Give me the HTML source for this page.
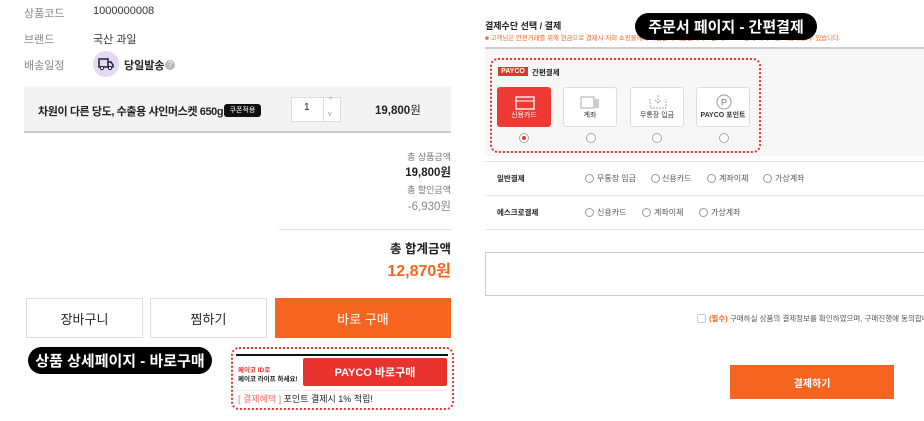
<!DOCTYPE html>
<html><head><meta charset="utf-8"><style>
*{margin:0;padding:0;box-sizing:border-box}
body{width:924px;height:421px;background:#fff;position:relative;overflow:hidden;font-family:"Liberation Sans","Noto Sans CJK KR",sans-serif;color:#222}
.a{position:absolute;white-space:nowrap}
.lbl{color:#888;font-size:11px}
.val{font-size:11px;color:#333}
.btn{position:absolute;display:flex;align-items:center;justify-content:center;font-size:13px}
.pill{position:absolute;background:#000;color:#fff;font-weight:bold;font-size:15px;border-radius:14px;display:flex;align-items:center;justify-content:center}
.tile{position:absolute;top:87px;width:54px;height:40px;border:1px solid #ddd;border-radius:3px;background:#fff;font-size:7px;color:#333;text-align:center}
.tile span{position:absolute;left:0;right:0;bottom:6px}
.rad{position:absolute;width:10px;height:10px;border:1px solid #aaa;border-radius:50%;background:#fff}
.r2{position:absolute;width:9px;height:9px;border:1px solid #999;border-radius:50%}
.t7{font-size:8px;color:#555}
</style></head><body>
<!-- LEFT -->
<div class="a lbl" style="left:24px;top:5px">상품코드</div>
<div class="a val" style="left:93px;top:5px">1000000008</div>
<div class="a lbl" style="left:24px;top:31px">브랜드</div>
<div class="a val" style="left:93px;top:31px">국산 과일</div>
<div class="a lbl" style="left:24px;top:57px">배송일정</div>
<div class="a" style="left:93px;top:51px;width:26px;height:26px;border-radius:50%;background:#e3d9f7"></div>
<svg class="a" style="left:97px;top:57px" width="18" height="14" viewBox="0 0 18 14"><path d="M2 2h9v8H2zM11 5h3l2 3v2h-5" fill="none" stroke="#222" stroke-width="1.5"/><circle cx="5" cy="11" r="1.6" fill="#fff" stroke="#222"/><circle cx="13" cy="11" r="1.6" fill="#fff" stroke="#222"/></svg>
<div class="a" style="left:124px;top:57px;font-size:11px;font-weight:bold">당일발송</div>
<div class="a" style="left:165px;top:60px;width:10px;height:10px;border-radius:50%;background:#bbb;color:#fff;font-size:8px;text-align:center;line-height:10px">?</div>

<div class="a" style="left:24px;top:86px;width:427px;height:47px;background:#f3f3f3;border-bottom:2px solid #ccc"></div>
<div class="a" style="left:38px;top:103px;font-size:11px;font-weight:bold;letter-spacing:-0.4px">차원이 다른 당도, 수출용 샤인머스켓 650g</div>
<div class="a" style="left:224px;top:104px;width:37px;height:13px;background:#111;border-radius:3px;color:#fff;font-size:7px;text-align:center;line-height:13px">쿠폰적용</div>
<div class="a" style="left:291px;top:97px;width:50px;height:25px;border:1px solid #ddd;background:#fff"></div>
<div class="a" style="left:323px;top:97px;width:1px;height:25px;background:#ddd"></div>
<div class="a" style="left:304px;top:102px;font-size:10px">1</div>
<div class="a" style="left:329px;top:97px;font-size:7px;color:#999">^</div>
<div class="a" style="left:328px;top:111px;font-size:7px;color:#999">v</div>
<div class="a" style="left:375px;top:102px;font-size:11.5px;font-weight:bold">19,800<span style="font-weight:normal">원</span></div>

<div class="a" style="right:473px;top:150px;font-size:9px;color:#777">총 상품금액</div>
<div class="a" style="right:473px;top:164px;font-size:11.5px;font-weight:bold">19,800원</div>
<div class="a" style="right:473px;top:183px;font-size:9px;color:#777">총 할인금액</div>
<div class="a" style="right:473px;top:198px;font-size:11.5px;color:#888">-6,930원</div>
<div class="a" style="left:279px;top:229px;width:172px;height:1px;background:#ddd"></div>
<div class="a" style="right:473px;top:238px;font-size:12.5px;font-weight:bold">총 합계금액</div>
<div class="a" style="right:473px;top:257px;font-size:16px;font-weight:bold;color:#f5651f">12,870원</div>

<div class="btn" style="left:26px;top:298px;width:117px;height:40px;border:1px solid #ddd">장바구니</div>
<div class="btn" style="left:150px;top:298px;width:117px;height:40px;border:1px solid #ddd">찜하기</div>
<div class="btn" style="left:275px;top:298px;width:176px;height:40px;background:#f5651f;color:#fff">바로 구매</div>
<div class="pill" style="left:28px;top:347px;width:184px;height:27px">상품 상세페이지 - 바로구매</div>

<div class="a" style="left:231px;top:347px;width:223px;height:63px;border:2px dotted #e8322d;border-radius:8px"></div>
<div class="a" style="left:236px;top:354px;width:212px;height:2px;background:#111"></div>
<div class="a" style="left:238px;top:364px;font-size:6.5px;color:#e8322d;font-weight:bold">페이코 ID로</div>
<div class="a" style="left:238px;top:373px;font-size:6.5px;color:#222;font-weight:bold">페이코 라이프 하세요!</div>
<div class="btn" style="left:303px;top:358px;width:144px;height:28px;background:#e8322d;color:#fff;font-size:11px;font-weight:bold;border-radius:2px">PAYCO 바로구매</div>
<div class="a" style="left:236px;top:390px;width:212px;height:1px;background:#eee"></div>
<div class="a" style="left:238px;top:392px;font-size:9px"><span style="color:#f07070">[ 결제혜택 ]</span> 포인트 결제시 1% 적립!</div>

<!-- RIGHT -->
<div class="a" style="left:485px;top:19px;font-size:9px;font-weight:bold">결제수단 선택 / 결제</div>
<div class="a" style="left:485px;top:33px;font-size:6.4px;color:#f5651f">■ 고객님은 안전거래를 위해 현금으로 결제시 저희 쇼핑몰에서 가입한 구매안전서비스인 에스크로 결제 서비스를 이용하실 수 있습니다.</div>
<div class="pill" style="left:635px;top:13px;width:182px;height:27px">주문서 페이지 - 간편결제</div>
<div class="a" style="left:485px;top:47px;width:439px;height:2px;background:#ccc"></div>
<div class="a" style="left:485px;top:49px;width:439px;height:107px;background:#f7f7f7"></div>
<div class="a" style="left:490px;top:58px;width:271px;height:95px;border:2px dotted #e8322d;border-radius:8px"></div>
<div class="a" style="left:498px;top:67px;width:30px;height:9px;background:#e8322d;color:#fff;font-size:7px;font-weight:bold;line-height:9px;text-align:center">PAYCO</div>
<div class="a" style="left:532px;top:67px;font-size:7.5px;font-weight:bold">간편결제</div>
<div class="tile" style="left:497px;background:#ee3a32;border-color:#ee3a32;color:#fff"><svg style="position:absolute;left:17px;top:8px" width="20" height="14"><rect x="1" y="1" width="18" height="12" fill="none" stroke="#fff" stroke-width="1.3"/><line x1="1" y1="5" x2="19" y2="5" stroke="#fff"/></svg><span>신용카드</span></div>
<div class="tile" style="left:563px"><svg style="position:absolute;left:16px;top:7px" width="22" height="15"><rect x="1" y="2" width="13" height="11" fill="none" stroke="#aaa"/><rect x="14" y="4" width="5" height="9" fill="#ccc"/></svg><span>계좌</span></div>
<div class="tile" style="left:630px"><svg style="position:absolute;left:17px;top:6px" width="20" height="16"><path d="M2 5v9h16V5M10 1v8M7 6l3 3 3-3" fill="none" stroke="#aaa" stroke-dasharray="2 1"/></svg><span>무통장 입금</span></div>
<div class="tile" style="left:696px"><svg style="position:absolute;left:19px;top:6px" width="16" height="16"><circle cx="8" cy="8" r="7" fill="none" stroke="#999"/><text x="5" y="11.5" font-size="9" fill="#777" font-family="Liberation Sans">P</text></svg><span style="font-weight:bold">PAYCO 포인트</span></div>
<div class="rad" style="left:519px;top:133px"><div style="position:absolute;left:2px;top:2px;width:4px;height:4px;border-radius:50%;background:#e8322d"></div></div>
<div class="rad" style="left:586px;top:133px"></div>
<div class="rad" style="left:652px;top:133px"></div>
<div class="rad" style="left:719px;top:133px"></div>

<div class="a" style="left:485px;top:161px;width:439px;height:1px;background:#e5e5e5"></div>
<div class="a" style="left:497px;top:173px;font-size:7.5px;font-weight:bold">일반결제</div>
<div class="r2" style="left:585px;top:174px"></div><div class="a t7" style="left:597px;top:173px">무통장 입금</div>
<div class="r2" style="left:651px;top:174px"></div><div class="a t7" style="left:662px;top:173px">신용카드</div>
<div class="r2" style="left:707px;top:174px"></div><div class="a t7" style="left:719px;top:173px">계좌이체</div>
<div class="r2" style="left:763px;top:174px"></div><div class="a t7" style="left:775px;top:173px">가상계좌</div>
<div class="a" style="left:485px;top:195px;width:439px;height:1px;background:#e5e5e5"></div>
<div class="a" style="left:497px;top:207px;font-size:7.5px;font-weight:bold">에스크로결제</div>
<div class="r2" style="left:585px;top:208px"></div><div class="a t7" style="left:597px;top:207px">신용카드</div>
<div class="r2" style="left:642px;top:208px"></div><div class="a t7" style="left:654px;top:207px">계좌이체</div>
<div class="r2" style="left:699px;top:208px"></div><div class="a t7" style="left:711px;top:207px">가상계좌</div>
<div class="a" style="left:485px;top:229px;width:439px;height:1px;background:#e5e5e5"></div>
<div class="a" style="left:485px;top:252px;width:445px;height:44px;border:1px solid #ccc"></div>
<div class="a" style="left:697px;top:314px;width:9px;height:9px;border:1px solid #ccc;border-radius:2px"></div>
<div class="a" style="left:709px;top:313px;font-size:7.5px;color:#555"><span style="color:#f5651f;font-weight:bold">(필수)</span> 구매하실 상품의 결제정보를 확인하였으며, 구매진행에 동의합니다.</div>
<div class="btn" style="left:730px;top:365px;width:164px;height:34px;background:#f5651f;color:#fff;font-size:10px;font-weight:bold">결제하기</div>
</body></html>
